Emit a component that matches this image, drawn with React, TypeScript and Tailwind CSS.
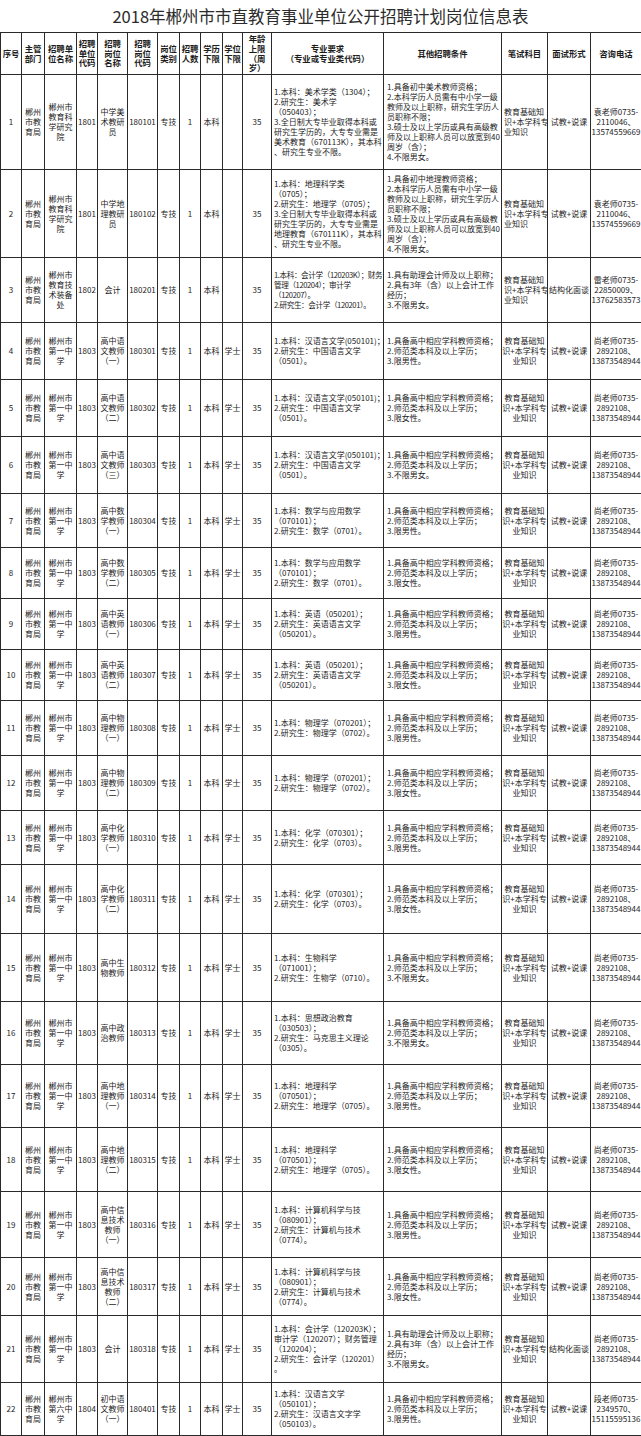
import React from 'react';

type Row = {
  n: string;
  unit: string[];
  code: string;
  post: string[];
  pcode: string;
  degree: string;
  major: string[];
  majorCls?: string;
  other: string[];
  examLeft?: boolean;
  interview: string;
  phone: string[];
  h: string;
};

const DEPT = ['郴州', '市教', '育局'];
const KEYAN = ['郴州市', '教育科', '学研究', '院'];
const YIZHONG = ['郴州市', '第一中', '学'];
const EXAM = ['教育基础知', '识+本学科专', '业知识'];
const YUAN = ['袁老师0735-', '2110046、', '13574559669'];
const SHANG = ['尚老师0735-', '2892108、', '13873548944'];
const KUAIJI = ['1.具有助理会计师及以上职称；', '2.具有3年（含）以上会计工作', '经历；', '3.不限男女。'];

const cond = (sex: string) => ['1.具备高中相应学科教师资格；', '2.师范类本科及以上学历；', `3.${sex}。`];

const yuwen = ['1.本科：汉语言文学(050101)；', '2.研究生：中国语言文学', '（0501）。'];
const shuxue = ['1.本科：数学与应用数学', '（070101）；', '2.研究生：数学（0701）。'];
const yingyu = ['1.本科：英语（050201）；', '2.研究生：英语语言文学', '（050201）。'];
const wuli = ['1.本科：物理学（070201）；', '2.研究生：物理学（0702）。'];
const huaxue = ['1.本科：化学（070301）；', '2.研究生：化学（0703）。'];
const dili = ['1.本科：地理科学', '（070501）；', '2.研究生：地理学（0705）。'];
const xinxi = ['1.本科：计算机科学与技', '（080901）；', '2.研究生：计算机与技术', '（0774）。'];

const rows: Row[] = [
  {
    n: '1', unit: KEYAN, code: '1801', post: ['中学美', '术教研', '员'], pcode: '180101', degree: '',
    major: ['1.本科：美术学类（1304）；', '2.研究生：美术学', '（050403）；', '3.全日制大专毕业取得本科或', '研究生学历的，大专专业需是', '美术教育（670113K），其本科', '、研究生专业不限。'],
    other: ['1.具备初中美术教师资格；', '2.本科学历人员需有中小学一级', '教师及以上职称，研究生学历人', '员职称不限；', '3.硕士及以上学历或具有高级教', '师及以上职称人员可以放宽到40', '周岁（含）；', '4.不限男女。'],
    examLeft: true, interview: '试教+说课', phone: YUAN, h: 'h-[95px]',
  },
  {
    n: '2', unit: KEYAN, code: '1801', post: ['中学地', '理教研', '员'], pcode: '180102', degree: '',
    major: ['1.本科：地理科学类', '（0705）；', '2.研究生：地理学（0705）；', '3.全日制大专毕业取得本科或', '研究生学历的，大专专业需是', '地理教育（670111K），其本科', '、研究生专业不限。'],
    other: ['1.具备初中地理教师资格；', '2.本科学历人员需有中小学一级', '教师及以上职称，研究生学历人', '员职称不限；', '3.硕士及以上学历或具有高级教', '师及以上职称人员可以放宽到40', '周岁（含）；', '4.不限男女。'],
    examLeft: true, interview: '试教+说课', phone: YUAN, h: 'h-[88px]',
  },
  {
    n: '3', unit: ['郴州市', '教育技', '术装备', '处'], code: '1802', post: ['会计'], pcode: '180201', degree: '',
    major: ['1.本科：会计学（120203K）；财务', '管理（120204）；审计学', '（120207）。', '2.研究生：会计学（120201）。'],
    majorCls: 'text-[7.6px] tracking-[-0.4px]',
    other: KUAIJI, examLeft: true, interview: '结构化面谈', phone: ['雷老师0735-', '22850009、', '13762583573'], h: 'h-[65px]',
  },
  { n: '4', unit: YIZHONG, code: '1803', post: ['高中语', '文教师', '（一）'], pcode: '180301', degree: '学士', major: yuwen, other: cond('限男性'), interview: '试教+说课', phone: SHANG, h: 'h-[57px]' },
  { n: '5', unit: YIZHONG, code: '1803', post: ['高中语', '文教师', '（二）'], pcode: '180302', degree: '学士', major: yuwen, other: cond('限女性'), interview: '试教+说课', phone: SHANG, h: 'h-[57px]' },
  { n: '6', unit: YIZHONG, code: '1803', post: ['高中语', '文教师', '（三）'], pcode: '180303', degree: '学士', major: yuwen, other: cond('不限男女'), interview: '试教+说课', phone: SHANG, h: 'h-[57px]' },
  { n: '7', unit: YIZHONG, code: '1803', post: ['高中数', '学教师', '（一）'], pcode: '180304', degree: '学士', major: shuxue, other: cond('限男性'), interview: '试教+说课', phone: SHANG, h: 'h-[54px]' },
  { n: '8', unit: YIZHONG, code: '1803', post: ['高中数', '学教师', '（二）'], pcode: '180305', degree: '学士', major: shuxue, other: cond('限女性'), interview: '试教+说课', phone: SHANG, h: 'h-[51px]' },
  { n: '9', unit: YIZHONG, code: '1803', post: ['高中英', '语教师', '（一）'], pcode: '180306', degree: '学士', major: yingyu, other: cond('限男性'), interview: '试教+说课', phone: SHANG, h: 'h-[51px]' },
  { n: '10', unit: YIZHONG, code: '1803', post: ['高中英', '语教师', '（二）'], pcode: '180307', degree: '学士', major: yingyu, other: cond('限女性'), interview: '试教+说课', phone: SHANG, h: 'h-[51px]' },
  { n: '11', unit: YIZHONG, code: '1803', post: ['高中物', '理教师', '（一）'], pcode: '180308', degree: '学士', major: wuli, other: cond('限男性'), interview: '试教+说课', phone: SHANG, h: 'h-[55px]' },
  { n: '12', unit: YIZHONG, code: '1803', post: ['高中物', '理教师', '（二）'], pcode: '180309', degree: '学士', major: wuli, other: cond('限女性'), interview: '试教+说课', phone: SHANG, h: 'h-[55px]' },
  { n: '13', unit: YIZHONG, code: '1803', post: ['高中化', '学教师', '（一）'], pcode: '180310', degree: '学士', major: huaxue, other: cond('限男性'), interview: '试教+说课', phone: SHANG, h: 'h-[54px]' },
  { n: '14', unit: YIZHONG, code: '1803', post: ['高中化', '学教师', '（二）'], pcode: '180311', degree: '学士', major: huaxue, other: cond('限女性'), interview: '试教+说课', phone: SHANG, h: 'h-[69px]' },
  { n: '15', unit: YIZHONG, code: '1803', post: ['高中生', '物教师'], pcode: '180312', degree: '学士', major: ['1.本科：生物科学', '（071001）；', '2.研究生：生物学（0710）。'], other: cond('不限男女'), interview: '试教+说课', phone: SHANG, h: 'h-[68px]' },
  { n: '16', unit: YIZHONG, code: '1803', post: ['高中政', '治教师'], pcode: '180313', degree: '学士', major: ['1.本科：思想政治教育', '（030503）；', '2.研究生：马克思主义理论', '（0305）。'], other: cond('不限男女'), interview: '试教+说课', phone: SHANG, h: 'h-[63px]' },
  { n: '17', unit: YIZHONG, code: '1803', post: ['高中地', '理教师', '（一）'], pcode: '180314', degree: '学士', major: dili, other: cond('限男性'), interview: '试教+说课', phone: SHANG, h: 'h-[63px]' },
  { n: '18', unit: YIZHONG, code: '1803', post: ['高中地', '理教师', '（二）'], pcode: '180315', degree: '学士', major: dili, other: cond('限女性'), interview: '试教+说课', phone: SHANG, h: 'h-[64px]' },
  { n: '19', unit: YIZHONG, code: '1803', post: ['高中信', '息技术', '教师', '（一）'], pcode: '180316', degree: '学士', major: xinxi, other: cond('限男性'), interview: '试教+说课', phone: SHANG, h: 'h-[66px]' },
  { n: '20', unit: YIZHONG, code: '1803', post: ['高中信', '息技术', '教师', '（二）'], pcode: '180317', degree: '学士', major: xinxi, other: cond('限女性'), interview: '试教+说课', phone: SHANG, h: 'h-[58px]' },
  {
    n: '21', unit: YIZHONG, code: '1803', post: ['会计'], pcode: '180318', degree: '学士',
    major: ['1.本科：会计学（120203K）；', '审计学（120207）；财务管理', '（120204）；', '2.研究生：会计学（120201）', '。'],
    other: KUAIJI, interview: '结构化面谈', phone: SHANG, h: 'h-[67px]',
  },
  {
    n: '22', unit: ['郴州市', '第六中', '学'], code: '1804', post: ['初中语', '文教师', '（一）'], pcode: '180401', degree: '学士',
    major: ['1.本科：汉语言文学', '（050101）；', '2.研究生：汉语言文字学', '（050103）。'],
    other: ['1.具备初中相应学科教师资格；', '2.师范类本科及以上学历；', '3.限男性。'],
    interview: '试教+说课', phone: ['段老师0735-', '2349570、', '15115595136'], h: 'h-[53px]',
  },
];

const headers: string[][] = [
  ['序号'],
  ['主管', '部门'],
  ['招聘单', '位名称'],
  ['招聘', '单位', '代码'],
  ['招聘', '岗位', '名称'],
  ['招聘', '岗位', '代码'],
  ['岗位', '类别'],
  ['招聘', '人数'],
  ['学历', '下限'],
  ['学位', '下限'],
  ['年龄', '上限', '（周', '岁）'],
  ['专业要求', '（专业或专业类代码）'],
  ['其他招聘条件'],
  ['笔试科目'],
  ['面试形式'],
  ['咨询电话'],
];

const widths = [21, 23, 32, 21, 30, 30, 22, 21, 22, 20, 29, 112, 118, 46, 43, 51];

function Lines({ lines }: { lines: string[] }) {
  return (
    <>
      {lines.map((l, i) => (
        <div key={i} className="whitespace-nowrap">
          {l}
        </div>
      ))}
    </>
  );
}

function C({ lines, left, className = '' }: { lines: string[]; left?: boolean; className?: string }) {
  return (
    <td
      className={`overflow-hidden border border-[#2a2a2a] p-0 align-middle ${left ? 'pl-[2px] text-left' : 'text-center'} ${className}`}
    >
      <Lines lines={lines} />
    </td>
  );
}

export default function App() {
  return (
    <div className="h-[1436px] w-[641px] overflow-hidden bg-white text-[#1c1c1c] [font-family:'Noto_Sans_CJK_SC','Noto_Sans',sans-serif]">
      <div className="flex h-[32px] items-center justify-center text-[16.5px] leading-none text-[#2b2b2b]">
        2018年郴州市市直教育事业单位公开招聘计划岗位信息表
      </div>
      <table className="w-[642px] table-fixed border-collapse text-[8px] leading-[10px]">
        <colgroup>
          {widths.map((w, i) => (
            <col key={i} style={{ width: w }} />
          ))}
        </colgroup>
        <thead>
          <tr className="h-[42px]">
            {headers.map((h, i) => (
              <th
                key={i}
                className="overflow-hidden border border-[#2a2a2a] p-0 text-center align-middle text-[8.4px] font-bold leading-[9.6px]"
              >
                <Lines lines={h} />
              </th>
            ))}
          </tr>
        </thead>
        <tbody>
          {rows.map((r) => (
            <tr key={r.n} className={r.h}>
              <C lines={[r.n]} />
              <C lines={DEPT} />
              <C lines={r.unit} />
              <C lines={[r.code]} />
              <C lines={r.post} />
              <C lines={[r.pcode]} />
              <C lines={['专技']} />
              <C lines={['1']} />
              <C lines={['本科']} />
              <C lines={[r.degree]} />
              <C lines={['35']} />
              <C lines={r.major} left className={r.majorCls} />
              <C lines={r.other} left className="pl-[3px]" />
              <C lines={EXAM} left={r.examLeft} />
              <C lines={[r.interview]} />
              <C lines={r.phone} />
            </tr>
          ))}
        </tbody>
      </table>
    </div>
  );
}
